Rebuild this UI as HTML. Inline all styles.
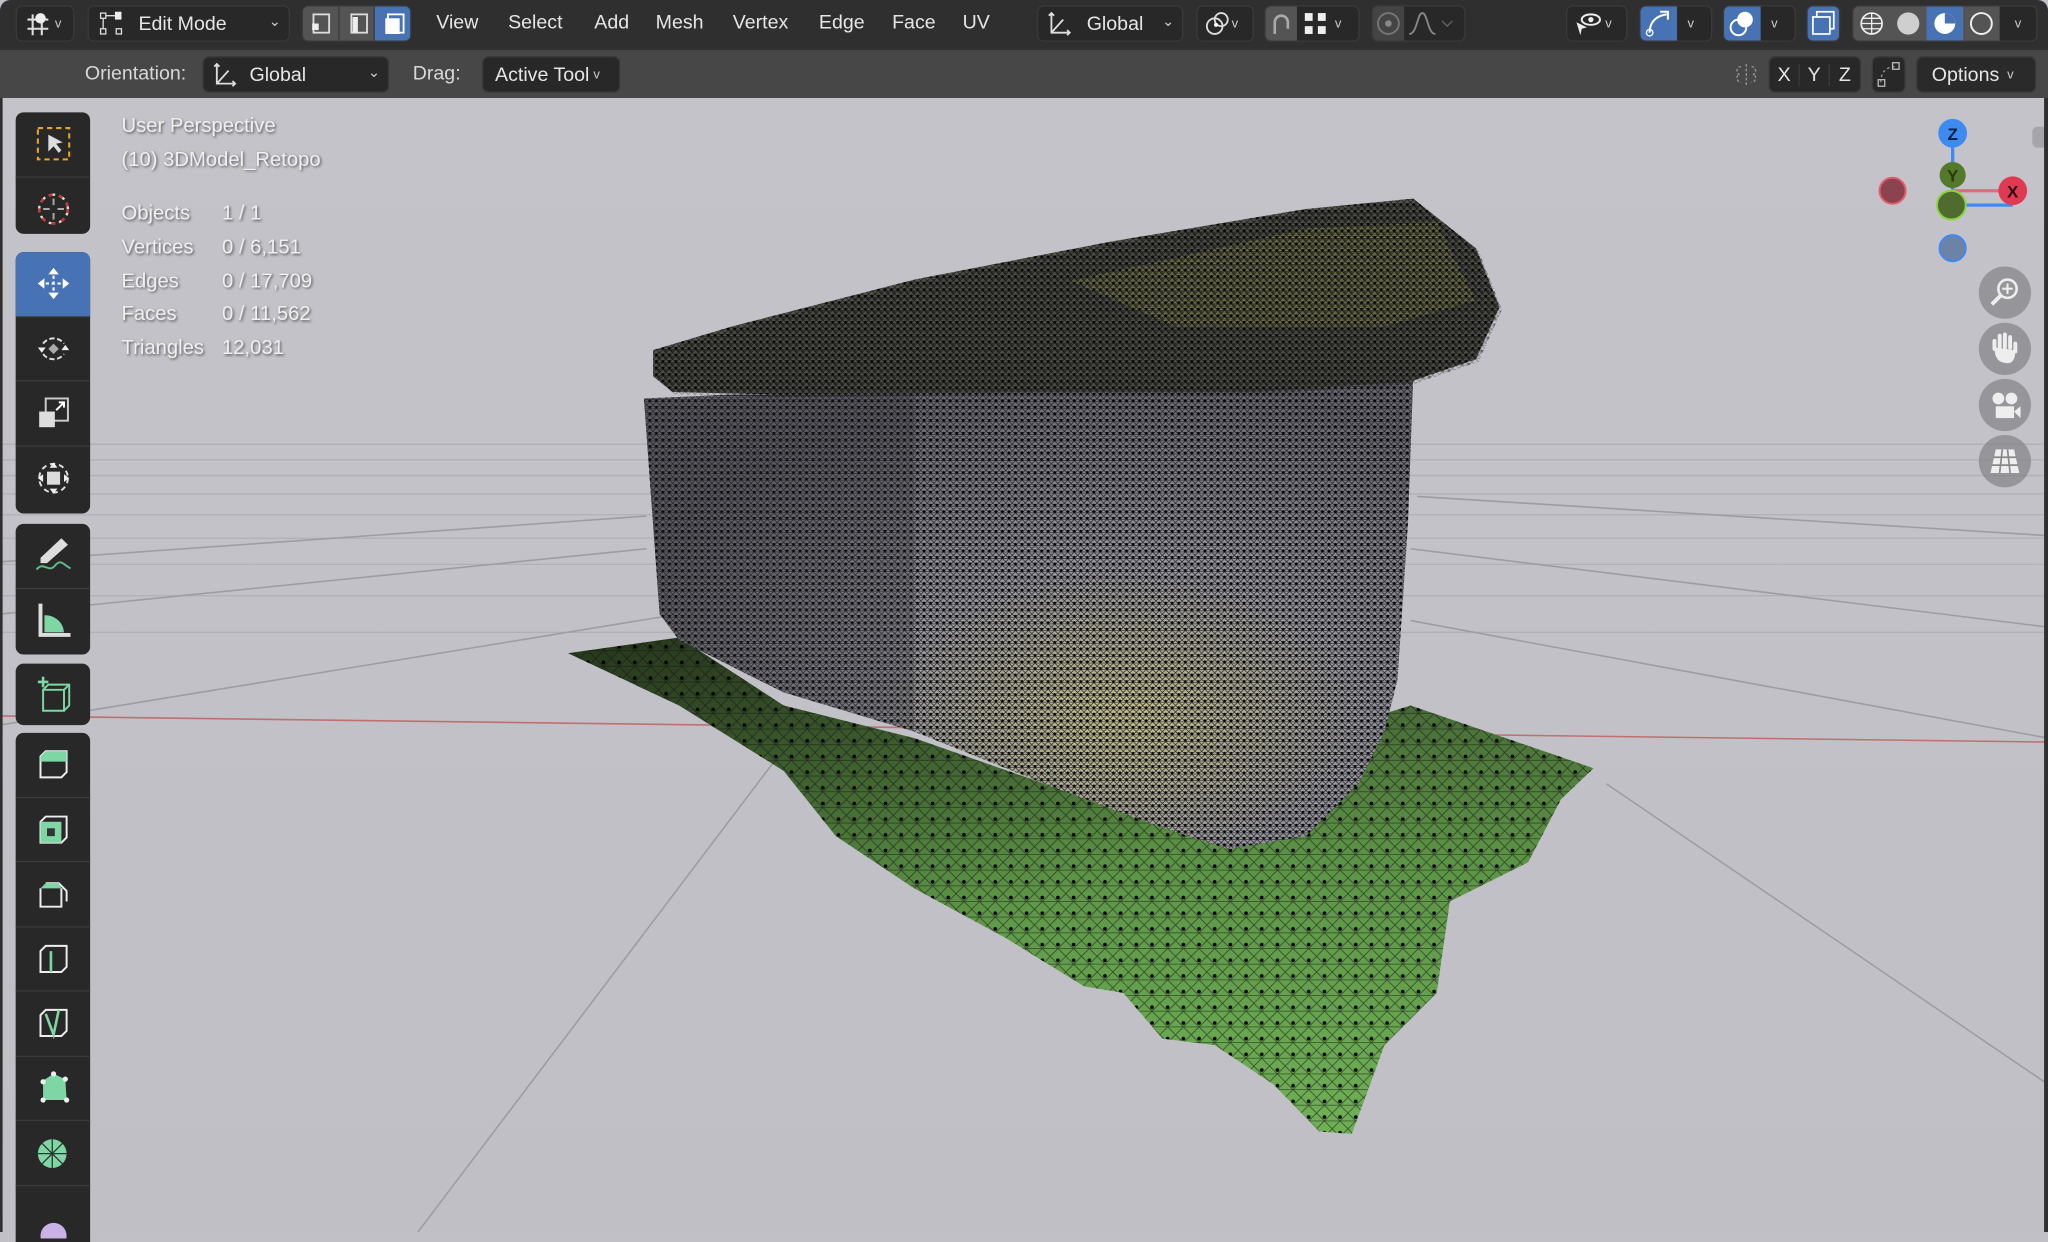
<!DOCTYPE html>
<html><head><meta charset="utf-8">
<style>
*{margin:0;padding:0;box-sizing:border-box}
html,body{width:2048px;height:1232px;overflow:hidden;background:#c0c0c6}
#w{position:absolute;left:0;top:0;width:1568px;height:943px;transform:scale(1.30612,1.30647);transform-origin:0 0;font-family:"Liberation Sans","DejaVu Sans",sans-serif;color:#e6e6e6;font-size:15px}
.bar1{position:absolute;left:0;top:0;width:1568px;height:37px;background:#2f2f2f;border-radius:8px 8px 0 0}
.bar2{position:absolute;left:0;top:37px;width:1568px;height:38px;background:#474747;border-top:1px solid #262626}
.b{position:absolute;height:28px;top:4px;background:#282828;border:1px solid #3a3a3a;border-radius:5px;display:flex;align-items:center}
.t{position:absolute;top:9px}
.bl{background:#4772b3}
.chev{position:absolute;right:6px;top:6px;font-size:11px;color:#ccc}
.vt{position:absolute;font-size:15.5px;color:#f0f0f0;text-shadow:1px 1px 2px rgba(0,0,0,.55)}
.tb{position:absolute;left:12px;width:57px;background:#282828;border-radius:6px}
.tb div{height:49.5px;border-bottom:1px solid #3a3a3a;display:flex;align-items:center;justify-content:center;position:relative}
.tb div:last-child{border-bottom:none}
.nav{position:absolute;width:40px;height:40px;border-radius:50%;background:rgba(130,130,134,.7);left:1515px}
</style></head><body><div id="w">
<svg style="position:absolute;left:0;top:75px" width="1568" height="868" viewBox="0 75 1568 868">
<defs>
<linearGradient id="bg" x1="0" y1="0" x2="0" y2="1"><stop offset="0" stop-color="#c3c3c9"/><stop offset="1" stop-color="#bfbfc5"/></linearGradient>
<pattern id="mesh" width="5" height="5" patternUnits="userSpaceOnUse"><path d="M0 0L5 5M5 0L0 5M0 2.5H5" stroke="#111" stroke-width=".6" opacity=".8"/><circle cx="2.5" cy="1.5" r="1" fill="#000"/></pattern>
<pattern id="mesh2" width="12" height="12" patternUnits="userSpaceOnUse"><path d="M0 0L12 12M12 0L0 12M0 6H12" stroke="#111" stroke-width=".6" opacity=".6"/><circle cx="6" cy="3" r="1.4" fill="#000"/></pattern>
<radialGradient id="front" cx=".62" cy=".72" r=".7"><stop offset="0" stop-color="#c6c28e"/><stop offset=".45" stop-color="#9a98a2"/><stop offset="1" stop-color="#6e6c76"/></radialGradient>
<linearGradient id="gr" x1="0" y1="0" x2="0" y2="1"><stop offset="0" stop-color="#3f5a30"/><stop offset=".45" stop-color="#5c9446"/><stop offset="1" stop-color="#6fb055"/></linearGradient>
<linearGradient id="grd" x1="0" y1="0" x2="1" y2="1"><stop offset="0" stop-color="#1c2814" stop-opacity=".7"/><stop offset=".5" stop-color="#1c2814" stop-opacity="0"/></linearGradient>
</defs>
<rect x="0" y="75" width="1568" height="868" fill="url(#bg)"/>
<g stroke="#b0b0b6" stroke-width="1" fill="none">
<path d="M0 340H1568M0 352H1568M0 364H1568M0 378H1568M0 394H1568M0 412H1568M0 432H1568M0 456H1568M0 484H1568"/>
</g>
<g stroke="#9c9ca2" stroke-width="1.2" fill="none">
<path d="M320 943L610 560M1230 600L1568 830M0 555L520 470M1080 475L1568 565M1080 420L1568 480M1085 380L1568 410M0 470L495 420M0 430L495 395"/>
</g>
<path d="M0 548L1568 568" stroke="#c07070" stroke-width="1.2"/>
<path id="gp" d="M435 500L520 488L600 540L700 565L800 600L900 605L1000 565L1080 540L1220 588L1195 612L1170 660L1110 690L1100 760L1060 800L1035 868L1010 866L975 830L930 800L890 795L860 760L830 755L770 718L700 680L640 640L600 590L520 540Z" fill="url(#gr)"/>
<path d="M435 500L520 488L600 540L700 565L800 600L900 605L1000 565L1080 540L1220 588L1195 612L1170 660L1110 690L1100 760L1060 800L1035 868L1010 866L975 830L930 800L890 795L860 760L830 755L770 718L700 680L640 640L600 590L520 540Z" fill="url(#grd)"/>
<path d="M435 500L520 488L600 540L700 565L800 600L900 605L1000 565L1080 540L1220 588L1195 612L1170 660L1110 690L1100 760L1060 800L1035 868L1010 866L975 830L930 800L890 795L860 760L830 755L770 718L700 680L640 640L600 590L520 540Z" fill="url(#mesh2)"/>
<path d="M493 305L560 302L800 300L960 298L1082 288L1078 400L1070 520L1060 560L1040 600L1000 640L940 650L880 630L800 600L700 560L600 530L520 490L505 470Z" fill="url(#front)"/>
<path d="M493 305L560 302L800 300L960 298L1082 288L1078 400L1070 520L1060 560L1040 600L1000 640L940 650L880 630L800 600L700 560L600 530L520 490L505 470Z" fill="url(#mesh)"/>
<path d="M493 305L700 300L700 560L600 530L520 490L505 470Z" fill="#2a2a2e" opacity=".25"/>
<path d="M500 268L560 250L700 214L850 185L1000 160L1082 152L1130 190L1148 235L1130 275L1080 292L960 300L800 300L600 302L515 300L500 288Z" fill="#55564e"/>
<path d="M820 215L1000 175L1100 170L1130 230L1060 250L900 250Z" fill="#868a50" opacity=".6"/>
<path d="M500 268L560 250L700 214L850 185L1000 160L1082 152L1130 190L1148 235L1130 275L1080 292L960 300L800 300L600 302L515 300L500 288Z" fill="url(#mesh)"/>
<path d="M500 268L560 250L700 214L850 185L1000 160L1082 152L1130 190L1148 235L1130 275L1080 292L960 300L800 300L600 302L515 300L500 288Z" fill="url(#mesh)" transform="translate(2 2)" opacity=".5"/>
</svg>

<div class="bar1"></div>
<div class="b" style="left:12px;width:45px"><svg width="22" height="22" style="margin-left:5px"><path d="M3 8H19M3 15H19M7 4V20M14 4V20" stroke="#ddd" stroke-width="1.6"/><circle cx="13" cy="7" r="4" fill="#eee"/></svg><span style="font-size:10px;color:#ccc;margin-left:2px">v</span></div>
<div class="b" style="left:67px;width:155px"><svg width="22" height="22" style="margin-left:6px"><rect x="3" y="3" width="4" height="4" fill="none" stroke="#ddd"/><rect x="14" y="2" width="5" height="6" fill="#eee"/><rect x="3" y="15" width="4" height="4" fill="none" stroke="#ddd"/><rect x="15" y="15" width="4" height="4" fill="none" stroke="#ddd"/><path d="M5 7V15M7 5H14" stroke="#ddd"/></svg><span style="margin-left:10px">Edit Mode</span><span class="chev" style="top:5px">⌄</span></div>
<div class="b" style="left:231px;width:84px;background:#545454;padding:0"><div style="width:28px;height:26px;border-right:1px solid #3a3a3a"></div><div style="width:28px;height:26px;border-right:1px solid #3a3a3a"></div><div style="width:27px;height:26px;background:#4772b3;border-radius:0 4px 4px 0"></div></div>
<svg style="position:absolute;left:233px;top:7px" width="82" height="22"><rect x="7" y="4" width="12" height="14" fill="none" stroke="#ddd" stroke-width="1.4"/><rect x="6" y="11" width="5" height="5" fill="#eee"/><rect x="36" y="4" width="12" height="14" fill="none" stroke="#ddd" stroke-width="1.4"/><rect x="37" y="6" width="4" height="12" fill="#eee"/><rect x="64" y="4" width="12" height="14" fill="none" stroke="#fff" stroke-width="1.4"/><rect x="62" y="7" width="11" height="12" fill="#fff"/></svg>
<span class="t" style="left:334px">View</span><span class="t" style="left:389px">Select</span><span class="t" style="left:455px">Add</span><span class="t" style="left:502px">Mesh</span><span class="t" style="left:561px">Vertex</span><span class="t" style="left:627px">Edge</span><span class="t" style="left:683px">Face</span><span class="t" style="left:737px">UV</span>
<div class="b" style="left:794px;width:112px"><svg width="22" height="22" style="margin-left:5px"><path d="M5 3V18H19M5 18L14 8M3 5L5 3L7 5M17 16L19 18L17 20" stroke="#ddd" stroke-width="1.4" fill="none"/></svg><span style="margin-left:10px">Global</span><span class="chev" style="top:5px">⌄</span></div>
<div class="b" style="left:916px;width:44px"><svg width="22" height="22" style="margin-left:4px"><circle cx="9" cy="13" r="6" fill="none" stroke="#ddd" stroke-width="1.4"/><circle cx="14" cy="8" r="5" fill="none" stroke="#ddd" stroke-width="1.4"/><circle cx="10" cy="12" r="1.5" fill="#fff"/></svg><span style="font-size:10px;color:#ccc">v</span></div>
<div class="b" style="left:968px;width:73px"><div style="width:24px;height:26px;background:#545454;border-radius:4px 0 0 4px"></div><svg width="22" height="22" style="margin-left:3px"><rect x="3" y="3" width="6" height="6" fill="#eee"/><rect x="13" y="3" width="6" height="6" fill="#eee"/><rect x="3" y="13" width="6" height="6" fill="#eee"/><rect x="13" y="13" width="6" height="6" fill="#eee"/></svg><span style="font-size:10px;color:#ccc;margin-left:4px">v</span></div>
<svg style="position:absolute;left:970px;top:8px" width="22" height="22"><path d="M6 18V9A5 5 0 0 1 16 9V14" stroke="#aaa" stroke-width="2" fill="none"/></svg>
<div class="b" style="left:1050px;width:72px"><div style="width:24px;height:26px;background:#444;border-radius:4px 0 0 4px"></div><svg width="40" height="22"><path d="M4 19C10 19 10 3 14 3S18 19 24 19" stroke="#888" stroke-width="1.4" fill="none"/><path d="M29 9L33 13L37 9" stroke="#666" fill="none"/></svg></div>
<svg style="position:absolute;left:1053px;top:8px" width="20" height="20"><circle cx="10" cy="10" r="8" fill="none" stroke="#777" stroke-width="1.4"/><circle cx="10" cy="10" r="2.5" fill="#888"/></svg>
<div class="b" style="left:1199px;width:47px"><svg width="26" height="22" style="margin-left:3px"><ellipse cx="15" cy="8" rx="7" ry="4" fill="none" stroke="#eee" stroke-width="1.5"/><circle cx="15" cy="8" r="2" fill="#eee"/><path d="M4 10L12 14L8 15L7 20Z" fill="#eee"/></svg><span style="font-size:10px;color:#ccc">v</span></div>
<div class="b" style="left:1255px;width:56px;padding:0"><div class="bl" style="width:28px;height:26px;border-radius:4px 0 0 4px"><svg width="28" height="26"><path d="M7 20C7 12 12 7 20 6" stroke="#fff" stroke-width="1.6" fill="none"/><circle cx="7" cy="20" r="2.5" fill="none" stroke="#fff"/><path d="M15 4H21V10" stroke="#fff" stroke-width="1.6" fill="none"/></svg></div><span style="font-size:10px;color:#ccc;margin-left:8px">v</span></div>
<div class="b" style="left:1319px;width:56px;padding:0"><div class="bl" style="width:28px;height:26px;border-radius:4px 0 0 4px"><svg width="28" height="26"><circle cx="11" cy="16" r="6" fill="none" stroke="#fff" stroke-width="1.5"/><circle cx="16" cy="10" r="6" fill="#fff"/></svg></div><span style="font-size:10px;color:#ccc;margin-left:8px">v</span></div>
<div class="b bl" style="left:1383px;width:26px"><svg width="24" height="24"><rect x="7" y="3" width="13" height="13" fill="none" stroke="#fff" stroke-width="1.3"/><rect x="4" y="7" width="13" height="13" fill="#4772b3" stroke="#fff" stroke-width="1.3"/></svg></div>
<div class="b" style="left:1418px;width:142px;padding:0;background:#545454"><div style="width:28px;height:26px;display:flex;align-items:center;justify-content:center"><svg width="20" height="20"><circle cx="10" cy="10" r="8" fill="none" stroke="#eee" stroke-width="1.3"/><path d="M2 10H18M10 2V18M3 6H17M3 14H17" stroke="#eee"/></svg></div><div style="width:28px;height:26px;display:flex;align-items:center;justify-content:center"><svg width="20" height="20"><circle cx="10" cy="10" r="8.5" fill="#cfcfcf"/></svg></div><div class="bl" style="width:28px;height:26px;display:flex;align-items:center;justify-content:center"><svg width="20" height="20"><circle cx="10" cy="10" r="8" fill="#fff"/><path d="M10 2A8 8 0 0 1 18 10H10Z" fill="#4772b3"/></svg></div><div style="width:28px;height:26px;display:flex;align-items:center;justify-content:center"><svg width="20" height="20"><circle cx="10" cy="10" r="8" fill="none" stroke="#eee" stroke-width="1.5"/></svg></div><div style="width:28px;height:26px;background:#282828;color:#ccc;font-size:10px;display:flex;align-items:center;justify-content:center;border-radius:0 4px 4px 0">v</div></div>

<div class="bar2"></div>
<span class="t" style="left:65px;top:48px;color:#d8d8d8">Orientation:</span>
<div class="b" style="left:155px;top:43px;width:143px"><svg width="22" height="22" style="margin-left:5px"><path d="M5 3V18H19M5 18L14 8M3 5L5 3L7 5M17 16L19 18L17 20" stroke="#ddd" stroke-width="1.4" fill="none"/></svg><span style="margin-left:8px">Global</span><span class="chev" style="top:5px">⌄</span></div>
<span class="t" style="left:316px;top:48px;color:#d8d8d8">Drag:</span>
<div class="b" style="left:369px;top:43px;width:106px"><span style="margin-left:9px">Active Tool</span><span style="font-size:10px;color:#ccc;margin-left:3px">v</span></div>
<svg style="position:absolute;left:1327px;top:47px" width="22" height="20"><path d="M10 2V18M6 4C2 4 2 10 5 10C2 10 2 16 6 16M14 4C18 4 18 10 15 10C18 10 18 16 14 16" stroke="#999" fill="none" stroke-dasharray="2 1.5"/></svg>
<div class="b" style="left:1354px;top:43px;width:71px;padding:0"><div style="width:23px;text-align:center;border-right:1px solid #3a3a3a">X</div><div style="width:23px;text-align:center;border-right:1px solid #3a3a3a">Y</div><div style="width:23px;text-align:center">Z</div></div>
<div class="b" style="left:1433px;top:43px;width:26px"><svg width="24" height="24"><path d="M6 18C6 10 10 6 18 6" stroke="#999" fill="none" stroke-dasharray="2 2"/><rect x="15" y="3" width="5" height="5" fill="none" stroke="#bbb"/><rect x="4" y="16" width="5" height="5" fill="none" stroke="#bbb"/></svg></div>
<div class="b" style="left:1467px;top:43px;width:92px;background:#2a2a2a"><span style="margin-left:11px">Options</span><span style="font-size:10px;color:#ccc;margin-left:6px">v</span></div>

<div class="vt" style="left:93px;top:88px">User Perspective</div>
<div class="vt" style="left:93px;top:114px">(10) 3DModel_Retopo</div>
<div class="vt" style="left:93px;top:155px">Objects</div><div class="vt" style="left:170px;top:155px">1 / 1</div>
<div class="vt" style="left:93px;top:181px">Vertices</div><div class="vt" style="left:170px;top:181px">0 / 6,151</div>
<div class="vt" style="left:93px;top:207px">Edges</div><div class="vt" style="left:170px;top:207px">0 / 17,709</div>
<div class="vt" style="left:93px;top:232px">Faces</div><div class="vt" style="left:170px;top:232px">0 / 11,562</div>
<div class="vt" style="left:93px;top:258px">Triangles</div><div class="vt" style="left:170px;top:258px">12,031</div>

<div class="tb" style="top:86px;height:93px">
<div><svg width="30" height="30"><rect x="3" y="3" width="24" height="24" fill="none" stroke="#e8a32c" stroke-width="1.6" stroke-dasharray="4 3"/><path d="M11 8V21L15 17L19 22L21 20L17 15L22 14Z" fill="#ddd"/></svg></div>
<div><svg width="30" height="30"><circle cx="15" cy="15" r="11" fill="none" stroke="#ddd" stroke-width="1.8" stroke-dasharray="5 3"/><circle cx="15" cy="15" r="11" fill="none" stroke="#c33" stroke-width="1.8" stroke-dasharray="3 5"/><path d="M15 7V12M15 18V23M7 15H12M18 15H23" stroke="#aaa" stroke-width="1.5"/></svg></div>
</div>
<div class="tb" style="top:193px;height:200px">
<div style="background:#4772b3;border-radius:6px 6px 0 0"><svg width="30" height="30"><path d="M15 3L11 8H19ZM15 27L11 22H19ZM3 15L8 11V19ZM27 15L22 11V19Z" fill="#fff"/><path d="M15 9V21M9 15H21" stroke="#fff" stroke-width="1.6" stroke-dasharray="2.5 2"/></svg></div>
<div><svg width="30" height="30"><path d="M7 11A10 10 0 0 1 23 11M7 19A10 10 0 0 0 23 19" stroke="#ddd" stroke-width="1.5" fill="none" stroke-dasharray="4 2"/><path d="M15 11L19 15L15 19L11 15Z" fill="#aaa"/><path d="M3 14H9L6 18ZM21 16H27L24 12Z" fill="#eee"/></svg></div>
<div><svg width="30" height="30"><rect x="9" y="4" width="17" height="17" fill="none" stroke="#ccc" stroke-width="1.5"/><rect x="4" y="14" width="12" height="12" fill="#ddd"/><path d="M17 13L23 7M19 7H23V11" stroke="#fff" stroke-width="1.5" fill="none"/></svg></div>
<div><svg width="30" height="30"><circle cx="15" cy="15" r="11" fill="none" stroke="#ddd" stroke-width="1.5" stroke-dasharray="4 3"/><rect x="10" y="10" width="10" height="10" fill="#ddd"/><path d="M15 3L12 7H18ZM15 27L12 23H18ZM3 15L7 12V18ZM27 15L23 12V18Z" fill="#eee"/></svg></div>
</div>
<div class="tb" style="top:401px;height:100px">
<div><svg width="32" height="32"><path d="M22 3L27 8L11 22L6 22L6 18Z" fill="#ddd"/><path d="M3 27C8 20 12 30 17 24S24 24 29 26" stroke="#5cbf88" stroke-width="1.5" fill="none"/></svg></div>
<div><svg width="32" height="32"><path d="M6 3V27H29" stroke="#ddd" stroke-width="3" fill="none"/><path d="M9 12A14 14 0 0 1 24 25H9Z" fill="#7ed6a4"/></svg></div>
</div>
<div class="tb" style="top:508px;height:47px"><div style="height:47px"><svg width="32" height="32"><path d="M4 6H12M8 2V10" stroke="#7ed6a4" stroke-width="2"/><path d="M8 12H24V28H8ZM8 12L12 8H28V24L24 28M24 12L28 8" stroke="#7ed6a4" stroke-width="1.5" fill="none"/></svg></div></div>
<div class="tb" style="top:561px;height:390px;border-radius:6px 6px 0 0">
<div><svg width="32" height="32"><path d="M6 10L10 6H26V22L22 26H6Z" fill="none" stroke="#eee" stroke-width="1.5"/><path d="M6 10L10 6H26V14H6Z" fill="#7ed6a4"/></svg></div>
<div><svg width="32" height="32"><path d="M6 10L10 6H26V22L22 26H6Z" fill="none" stroke="#eee" stroke-width="1.5"/><rect x="6" y="10" width="16" height="16" fill="#7ed6a4"/><rect x="11" y="15" width="6" height="6" fill="#333"/></svg></div>
<div><svg width="32" height="32"><path d="M6 12V26H22V12M10 8H20L26 14V22" fill="none" stroke="#eee" stroke-width="1.5"/><path d="M6 12L10 8H20L22 12Z" fill="#7ed6a4"/></svg></div>
<div><svg width="32" height="32"><path d="M6 10L10 6H26V22L22 26H6Z" fill="none" stroke="#eee" stroke-width="1.5"/><path d="M14 10V26" stroke="#7ed6a4" stroke-width="2"/></svg></div>
<div><svg width="32" height="32"><path d="M6 10L10 6H26V22L22 26H6Z" fill="none" stroke="#eee" stroke-width="1.5"/><path d="M10 9L16 25L20 6" stroke="#7ed6a4" stroke-width="2" fill="none"/></svg></div>
<div><svg width="32" height="32"><path d="M8 10L16 5L25 9L26 25H8Z" fill="#7ed6a4"/><circle cx="8" cy="11" r="2" fill="#eee"/><circle cx="16" cy="5" r="2" fill="#eee"/><circle cx="25" cy="9" r="2" fill="#eee"/><circle cx="8" cy="25" r="2" fill="#eee"/><circle cx="26" cy="25" r="2" fill="#eee"/></svg></div>
<div><svg width="32" height="32"><circle cx="15" cy="17" r="11" fill="#7ed6a4"/><path d="M15 6V28M4 17H26M7 9L23 25M23 9L7 25" stroke="#333" stroke-width="1"/></svg></div>
<div style="height:40px;align-items:flex-end"><svg width="32" height="22"><ellipse cx="16" cy="20" rx="10" ry="10" fill="#c9b2e6"/></svg></div>
</div>

<svg style="position:absolute;left:1430px;top:85px" width="130" height="120">
<path d="M65 17V72M65 72H111" stroke="#3d8af0" stroke-width="2.5"/>
<path d="M65 61H111" stroke="#e36a7a" stroke-width="2.5"/>
<circle cx="19" cy="61" r="10" fill="#8c4350" stroke="#e35d6d" stroke-width="1.5"/>
<circle cx="65" cy="49" r="10" fill="#55792a"/>
<text x="65" y="54" font-size="13" text-anchor="middle" fill="#2a3a10" font-family="Liberation Sans" font-weight="bold">Y</text>
<circle cx="111" cy="61" r="11" fill="#e03a52"/>
<text x="111" y="66" font-size="13" text-anchor="middle" fill="#2a0a10" font-family="Liberation Sans" font-weight="bold">X</text>
<circle cx="65" cy="17" r="11" fill="#3d8af0"/>
<text x="65" y="22" font-size="13" text-anchor="middle" fill="#0b2040" font-family="Liberation Sans" font-weight="bold">Z</text>
<circle cx="64" cy="72" r="11" fill="#4f6b2e" stroke="#8ad63a" stroke-width="1.5"/>
<circle cx="65" cy="105" r="10" fill="#6c82a6" stroke="#3d8af0" stroke-width="1.5"/>
</svg>
<div class="nav" style="top:204px"><svg width="40" height="40"><circle cx="22" cy="17" r="7" fill="none" stroke="#eee" stroke-width="2"/><path d="M22 13V21M18 17H26" stroke="#eee" stroke-width="1.6"/><path d="M17 22L10 29" stroke="#eee" stroke-width="3"/></svg></div>
<div class="nav" style="top:247px"><svg width="40" height="40"><path d="M12 20V14M16 19V10M20 19V9M24 19V11M28 22V16" stroke="#eee" stroke-width="3" stroke-linecap="round"/><path d="M12 19Q12 31 22 31Q28 31 28 21Z" fill="#eee"/></svg></div>
<div class="nav" style="top:290px"><svg width="40" height="40"><circle cx="15" cy="15" r="4.5" fill="#eee"/><circle cx="25" cy="15" r="4.5" fill="#eee"/><rect x="13" y="21" width="14" height="9" fill="#eee"/><path d="M27 25L32 21V30Z" fill="#eee"/></svg></div>
<div class="nav" style="top:333px"><svg width="40" height="40"><path d="M13 11H27L31 29H9Z" fill="#eee"/><path d="M18 11L16 29M22 11L24 29M11 17H29M10 23H30" stroke="#888" stroke-width="1.3"/></svg></div>
<div style="position:absolute;left:1556px;top:97px;width:12px;height:16px;background:#a5a5aa;border-radius:4px 0 0 4px"></div>
<div style="position:absolute;left:1565px;top:75px;width:3px;height:868px;background:#2f2f2f"></div>
<div style="position:absolute;left:0;top:75px;width:2px;height:868px;background:#2f2f2f"></div>
</div></body></html>
